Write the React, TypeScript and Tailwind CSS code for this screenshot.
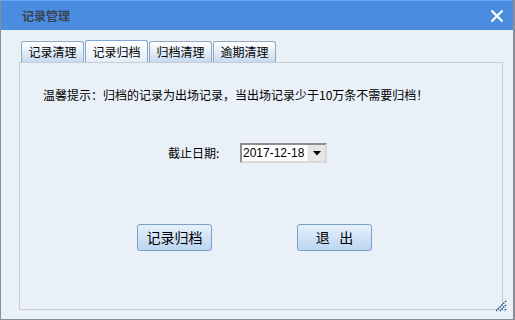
import React from "react";

const font = { fontFamily: '"Noto Sans CJK SC", "Liberation Sans", sans-serif' };

function Tab({ label, active }: { label: string; active?: boolean }) {
  return (
    <div
      className={
        "flex items-center justify-center w-[63px] rounded-t-[3px] border border-b-0 text-[12px] text-black " +
        (active
          ? "h-[22px] border-[#7ea6d6] bg-gradient-to-b from-[#ffffff] to-[#e4eef9]"
          : "h-[21px] border-[#93a7ba] bg-gradient-to-b from-[#ffffff] to-[#c6dbf1]")
      }
    >
      {label}
    </div>
  );
}

function Btn({ children }: { children: React.ReactNode }) {
  return (
    <div className="w-[75px] h-[27px] flex items-center justify-center rounded-[3px] border border-[#7d9fc8] bg-gradient-to-b from-[#e6f0fb] to-[#bcd6f2] text-[14px] text-black">
      {children}
    </div>
  );
}

export default function App() {
  return (
    <div className="w-[515px] h-[320px] flex flex-col bg-[#e9f0f8] border-l border-r-2 border-b border-[#8a8f96]" style={font}>
      <div className="h-[30px] shrink-0 flex items-center justify-between bg-[#4a8de0] border-t border-[#6aa6ee] pl-[21px] pr-[9px]">
        <span className="text-[12px] font-bold text-[#3a4452]">记录管理</span>
        <svg width="14" height="14" viewBox="0 0 14 14">
          <path d="M1.5 1.5 L12.5 12.5 M12.5 1.5 L1.5 12.5" stroke="#ffffff" strokeWidth="2.2" />
        </svg>
      </div>
      <div className="flex-1 flex flex-col pt-[10px] pl-[18px] pr-[10px] pb-[9px] relative">
        <div className="flex items-end gap-[1px] pl-[2px] h-[22px]">
          <Tab label="记录清理" />
          <Tab label="记录归档" active />
          <Tab label="归档清理" />
          <Tab label="逾期清理" />
        </div>
        <div className="flex-1 border border-[#c9ccd0] flex flex-col">
          <div className="mt-[24px] pl-[23px] text-[12px] leading-[16px] text-black">
            温馨提示：归档的记录为出场记录，当出场记录少于10万条不需要归档！
          </div>
          <div className="mt-[40px] flex items-center pl-[148px]">
            <span className="w-[72px] text-[12px] text-black">截止日期:</span>
            <div className="flex h-[20px] w-[87px] border-2 border-t-[#8e8e8e] border-l-[#8e8e8e] border-r-[#d8d8d8] border-b-[#d8d8d8] bg-white">
              <div className="flex-1 flex items-center pl-[1px] text-[12px] text-black" style={{ fontFamily: '"Liberation Sans", sans-serif' }}>
                2017-12-18
              </div>
              <div className="w-[18px] flex items-center justify-center bg-[#e6e6e6] border-l border-[#f4f4f4]">
                <svg width="8" height="5" viewBox="0 0 8 5">
                  <path d="M0 0 H8 L4 4.5 Z" fill="#000" />
                </svg>
              </div>
            </div>
          </div>
          <div className="mt-[61px] flex pl-[117px] gap-[85px]">
            <Btn>记录归档</Btn>
            <Btn>退&nbsp;&nbsp;&nbsp;出</Btn>
          </div>
        </div>
        <svg className="absolute right-[6px] bottom-[7px]" width="12" height="12" viewBox="0 0 12 12">
          <path d="M11 1 L1 11 M11 5 L5 11 M11 9 L9 11" stroke="#1f4f8f" strokeWidth="1.5" strokeDasharray="1.5 1" />
        </svg>
      </div>
    </div>
  );
}
